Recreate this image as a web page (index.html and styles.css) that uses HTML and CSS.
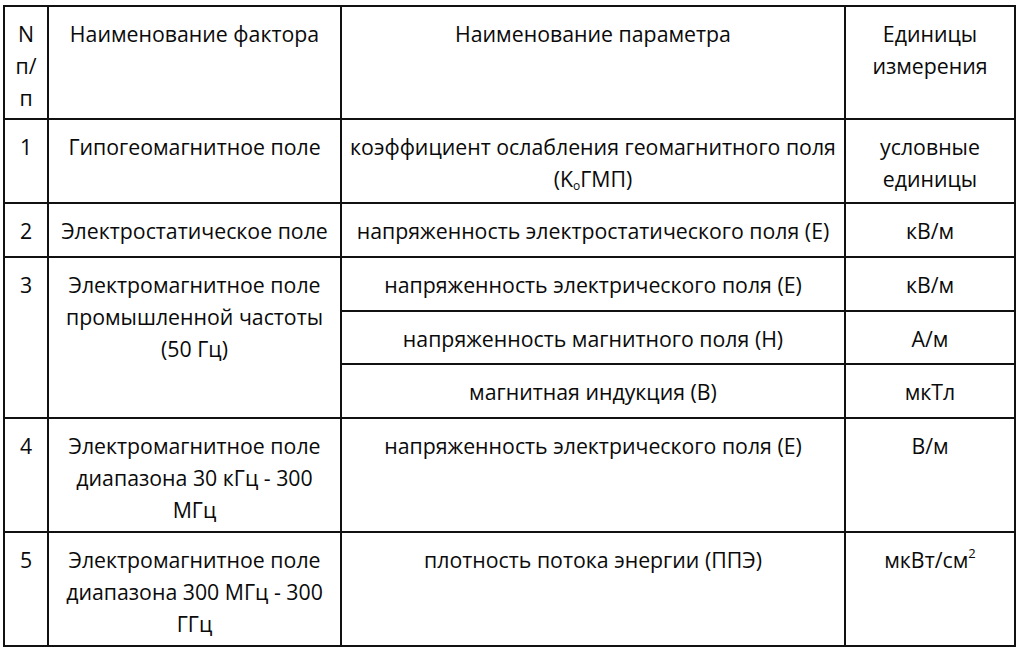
FILE: index.html
```html
<!DOCTYPE html>
<html lang="ru">
<head>
<meta charset="utf-8">
<title>Факторы</title>
<link rel="stylesheet" href="styles.css">
</head>
<body>
<div class="page">
<table class="grid">
  <colgroup>
    <col class="c-num">
    <col class="c-factor">
    <col class="c-param">
    <col class="c-unit">
  </colgroup>
  <tr class="h-head">
    <td>N<br>п/<br>п</td>
    <td>Наименование фактора</td>
    <td>Наименование параметра</td>
    <td>Единицы<br>измерения</td>
  </tr>
  <tr class="h-r1">
    <td>1</td>
    <td>Гипогеомагнитное поле</td>
    <td>коэффициент ослабления геомагнитного поля<br>(K<sub>o</sub>ГМП)</td>
    <td>условные<br>единицы</td>
  </tr>
  <tr class="h-r2">
    <td>2</td>
    <td>Электростатическое поле</td>
    <td>напряженность электростатического поля (Е)</td>
    <td>кВ/м</td>
  </tr>
  <tr class="h-r3a">
    <td rowspan="3">3</td>
    <td rowspan="3">Электромагнитное поле<br>промышленной частоты<br>(50 Гц)</td>
    <td>напряженность электрического поля (Е)</td>
    <td>кВ/м</td>
  </tr>
  <tr class="h-r3b">
    <td>напряженность магнитного поля (Н)</td>
    <td>А/м</td>
  </tr>
  <tr class="h-r3c">
    <td>магнитная индукция (В)</td>
    <td>мкТл</td>
  </tr>
  <tr class="h-r4">
    <td>4</td>
    <td>Электромагнитное поле<br>диапазона 30 кГц - 300<br>МГц</td>
    <td>напряженность электрического поля (Е)</td>
    <td>В/м</td>
  </tr>
  <tr class="h-r5">
    <td>5</td>
    <td>Электромагнитное поле<br>диапазона 300 МГц - 300<br>ГГц</td>
    <td>плотность потока энергии (ППЭ)</td>
    <td>мкВт/см<sup>2</sup></td>
  </tr>
</table>
</div>
</body>
</html>
```

FILE: styles.css
```css
html, body {
  margin: 0;
  padding: 0;
  background: #ffffff;
}

.page {
  padding: 5px 0 0 3px;
}

.grid {
  border-collapse: collapse;
  table-layout: fixed;
  width: 1012px;
  font-family: "Open Sans", "DejaVu Sans", sans-serif;
  font-size: 21.3px;
  line-height: 32px;
  color: #0a0a0a;
}

.c-num { width: 44px; }
.c-factor { width: 293px; }
.c-param { width: 504px; }
.c-unit { width: 170px; }

.grid td {
  border: 2px solid #111111;
  text-align: center;
  vertical-align: top;
  padding: 11px 0 0 0;
  white-space: nowrap;
  overflow: hidden;
}

.h-head { height: 113px; }
.h-r1 { height: 84px; }
.h-r2 { height: 54px; }
.h-r3a { height: 54px; }
.h-r3b { height: 53px; }
.h-r3c { height: 54px; }
.h-r4 { height: 114px; }
.h-r5 { height: 114px; }

sub {
  font-size: 12px;
  line-height: 0;
  vertical-align: -3px;
}

sup {
  font-size: 13px;
  line-height: 0;
  vertical-align: 10px;
}
```
